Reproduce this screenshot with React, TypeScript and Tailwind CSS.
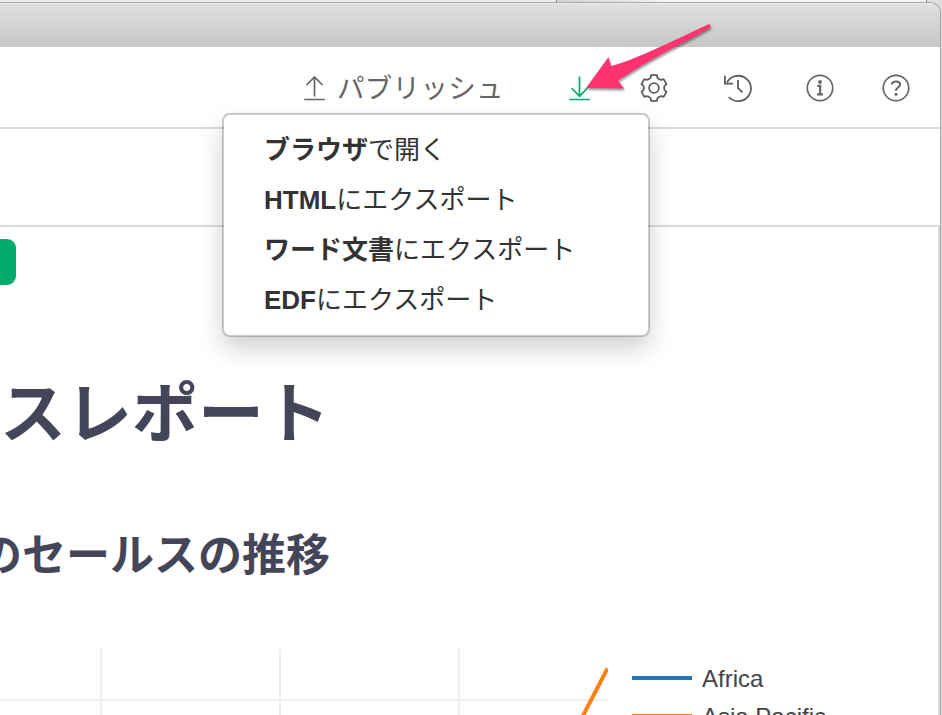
import React from "react";

const FONT = "font-['Liberation_Sans','Noto_Sans_CJK_JP',sans-serif]";

const MENU = [
  { strong: "ブラウザ", rest: "で開く" },
  { strong: "HTML", rest: "にエクスポート" },
  { strong: "ワード文書", rest: "にエクスポート" },
  { strong: "EDF", rest: "にエクスポート" },
];

function gearPath() {
  const at = (x: number, y: number, deg: number) => {
    const r = (deg * Math.PI) / 180;
    return `${(15 + x * Math.cos(r) - y * Math.sin(r)).toFixed(2)} ${(15 + x * Math.sin(r) + y * Math.cos(r)).toFixed(2)}`;
  };
  let d = "";
  for (let i = 0; i < 6; i++) {
    const a = i * 60;
    d += `${i ? "L" : "M"}${at(-2.9, -12.8, a)} L${at(2.9, -12.8, a)} L${at(3.4, -10.2, a)} Q${at(5.3, -8.2, a)} ${at(-3.4, -10.2, a + 60)} `;
  }
  return d + "Z";
}

function UploadIcon() {
  return (
    <svg className="h-[30px] w-6" viewBox="0 0 24 30" fill="none" stroke="#666" strokeWidth="1.7">
      <path d="M11.500 4.500V23.500M3.500 12L11.500 4L19.500 12M1.200 26.500H21.800" />
    </svg>
  );
}

function DownloadIcon() {
  return (
    <svg className="h-[30px] w-6" viewBox="0 0 24 30" fill="none" stroke="#00a968" strokeWidth="1.7">
      <path d="M11.500 3.500V23M3.500 15L11.500 23.300L19.500 15M1.300 26.500H21.800" />
    </svg>
  );
}

function GearIcon() {
  return (
    <svg className="h-[30px] w-[30px]" viewBox="0 0 30 30" fill="none" stroke="#5c5c5c" strokeWidth="1.8" strokeLinejoin="round">
      <path d={gearPath()} />
      <circle cx="15" cy="15" r="4.900" />
    </svg>
  );
}

function HistoryIcon() {
  return (
    <svg className="h-[30px] w-[30px]" viewBox="0 0 30 30" fill="none" stroke="#5c5c5c" strokeWidth="1.8">
      <path d="M4 9.500A12.700 12.700 0 1 1 5.800 24" />
      <path d="M1.900 2.800V10.600H10" />
      <path d="M15 7V15.200L19.500 19.300" />
    </svg>
  );
}

function InfoIcon() {
  return (
    <svg className="h-[30px] w-[30px]" viewBox="0 0 30 30" fill="none" stroke="#666" strokeWidth="1.7">
      <circle cx="15" cy="15" r="12.700" />
      <circle cx="15" cy="9" r="1.900" fill="#666" stroke="none" />
      <path d="M12.300 12.900H15.200V21M12.100 21.300H18" strokeWidth="2.200" />
    </svg>
  );
}

function HelpIcon() {
  return (
    <svg className="h-[30px] w-[30px]" viewBox="0 0 30 30" fill="none" stroke="#666" strokeWidth="1.7">
      <circle cx="15" cy="15" r="12.700" />
      <path d="M10.800 11.500C11 9.300 12.600 8.500 15 8.500C17.400 8.500 19.100 9.500 19.100 11.500C19.100 14.300 15 14.300 15 17.800" strokeWidth="2.100" />
      <circle cx="15" cy="21.300" r="1.500" fill="#666" stroke="none" />
    </svg>
  );
}

function ExportMenu() {
  return (
    <ul className="absolute left-[222px] top-[113px] h-[224px] w-[428px] rounded-lg border-2 border-black/20 bg-white bg-clip-padding pl-10 pt-[10px] text-[26px] text-[#333] shadow-[0_12px_24px_rgba(0,0,0,0.18)]">
      {MENU.map((m) => (
        <li key={m.strong} className="h-[50px] whitespace-nowrap leading-[50px]">
          <b>{m.strong}</b>
          {m.rest}
        </li>
      ))}
    </ul>
  );
}

function PointerArrow() {
  return (
    <svg className="absolute left-[576px] top-[14px] h-[90px] w-[146px] drop-shadow-[1px_2px_1px_rgba(0,0,0,0.4)]" viewBox="576 14 146 90">
      <path fill="#ff3370" d="M586 88L608.500 57L611 66C632 61 666 44 707 25C710 23.500 712 26 709.500 28C676 47 647 61 618 80.500L624 88.500Z" />
    </svg>
  );
}

export default function App() {
  return (
    <div className={`relative flex h-[715px] w-[942px] flex-col overflow-hidden bg-[#dedede] ${FONT}`}>
      <div className="flex h-0.5 shrink-0">
        <div className="w-[557px] border-r border-[#888] bg-[#ececec]" />
        <div className="w-[370px] border-r border-[#888] bg-gradient-to-r from-[#d2d2d2] to-[#f4f4f4] to-30%" />
      </div>

      <div className="mr-px flex min-h-0 flex-1 flex-col overflow-hidden rounded-tr-[11px] border-r border-t border-[#a6a6a6] bg-white">
        <div className="h-11 shrink-0 border-t border-[#eee] bg-gradient-to-b from-[#e0e0e0] to-[#c6c6c6]" />

        <header className="flex h-[82px] shrink-0 items-center border-b-2 border-[#dadada] pl-[303px] pt-[2px]">
          <button className="flex w-[265px] items-center gap-[10px] text-[#666]">
            <UploadIcon />
            <span className="whitespace-nowrap pt-[2px] text-[27.500px] leading-[40px] tracking-[0.3px]">パブリッシュ</span>
          </button>
          <DownloadIcon />
          <div className="ml-[47px] flex items-center">
            <GearIcon />
            <span className="w-[54px]" />
            <HistoryIcon />
            <span className="w-[52px]" />
            <InfoIcon />
            <span className="w-[46px]" />
            <HelpIcon />
          </div>
        </header>

        <div className="h-[98px] shrink-0 border-b-2 border-[#dadada]" />

        <main className="flex min-h-0 flex-1 flex-col overflow-hidden border-r-2 border-[#dadada]">
          <div className="mt-3 h-[46px] w-4 shrink-0 rounded-r-[9px] bg-[#00ab6b]" />
          <h1 className="mt-[79px] h-[100px] shrink-0 whitespace-nowrap text-[66px] font-bold leading-[100px] text-[#444558]">スレポート</h1>
          <h2 className="-ml-[22px] mt-[57px] h-[70px] shrink-0 whitespace-nowrap text-[44px] font-bold leading-[70px] text-[#444558]">のセールスの推移</h2>
          <div className="mt-[58px] flex h-[66px] shrink-0">
            <svg className="h-[66px] w-[608px]" viewBox="0 0 608 66" fill="none">
              <path d="M101 0V66M280 0V66M459 0V66M0 51H608" stroke="#eee" strokeWidth="2" />
              <path d="M575 82L607.500 19.500" stroke="#ff7f0e" strokeWidth="4" />
            </svg>
            <div className="ml-6 flex h-[66px] flex-col overflow-hidden pt-[11px] text-[24px] text-[#444]">
              <div className="flex h-[38px] shrink-0 items-center gap-2.5">
                <span className="mb-[2px] h-1 w-[60px] bg-[#1f77b4]" />
                <span>Africa</span>
              </div>
              <div className="flex h-[38px] shrink-0 items-center gap-2.5">
                <span className="mb-[2px] h-1 w-[60px] bg-[#ff7f0e]" />
                <span>Asia Pacific</span>
              </div>
            </div>
          </div>
        </main>
      </div>

      <ExportMenu />
      <PointerArrow />
    </div>
  );
}
